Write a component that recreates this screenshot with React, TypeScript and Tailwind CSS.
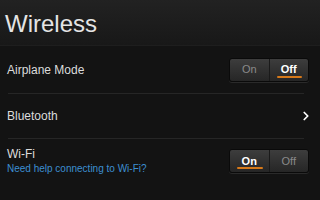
import { ChevronRight } from 'lucide-react';

function Toggle({ on }: { on: boolean }) {
  const seg = 'relative flex-1 flex items-center justify-center text-[11px]';
  return (
    <div className="mr-[4px] flex h-[24px] w-[80px] rounded-[3px] border border-[#0a0a0a] bg-gradient-to-b from-[#3d3d3d] to-[#262626] shadow-[0_1px_0_#2a2a2a]">
      <div className={`${seg} ${on ? 'text-white font-bold' : 'text-[#8a8a8a]'}`}>
        On
        {on && <span className="absolute bottom-[3px] left-[7px] right-[6px] h-[2px] rounded bg-[#d6791a]" />}
      </div>
      <div className="w-px bg-[#1a1a1a]" />
      <div className={`${seg} ${!on ? 'text-white font-bold' : 'text-[#8a8a8a]'}`}>
        Off
        {!on && <span className="absolute bottom-[3px] left-[7px] right-[6px] h-[2px] rounded bg-[#d6791a]" />}
      </div>
    </div>
  );
}

export default function App() {
  return (
    <div className="h-[200px] w-[320px] overflow-hidden bg-[#131313] font-['Liberation_Sans',Arial,sans-serif] text-[#dcdcdc]">
      <div className="flex h-[46px] items-center border-b border-[#1e1e1e] bg-gradient-to-b from-[#222] to-[#181818] pl-[5px] pt-[2px] text-[24px] text-[#e4e4e4]">
        Wireless
      </div>
      <div className="flex h-[47px] items-center justify-between px-[7px]">
        <span className="text-[12px]">Airplane Mode</span>
        <Toggle on={false} />
      </div>
      <div className="mx-[8px] mr-[16px] h-px bg-[#262626]" />
      <div className="flex h-[44px] items-center justify-between px-[7px]">
        <span className="text-[12px]">Bluetooth</span>
        <ChevronRight size={14} strokeWidth={3} className="text-white" />
      </div>
      <div className="mx-[8px] mr-[16px] h-px bg-[#262626]" />
      <div className="flex h-[44px] items-center justify-between px-[7px]">
        <div className="flex flex-col">
          <span className="text-[12px] leading-[15px]">Wi-Fi</span>
          <span className="text-[10px] leading-[13px] text-[#3d8fd1]">Need help connecting to Wi-Fi?</span>
        </div>
        <Toggle on={true} />
      </div>
    </div>
  );
}
